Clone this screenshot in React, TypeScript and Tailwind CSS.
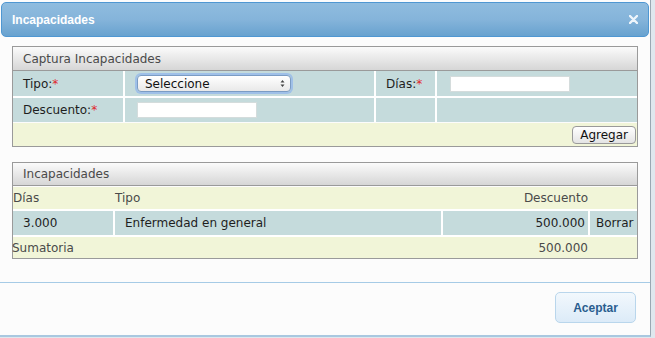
import React from 'react';

const font = { fontFamily: '"DejaVu Sans", "Liberation Sans", sans-serif' };
const boldFont = { fontFamily: '"Liberation Sans", Arial, sans-serif' };

function Req() {
  return <span className="text-[#e0262c]">*</span>;
}

export default function App() {
  return (
    <div className="w-[655px] h-[338px] bg-[#dfe8ee] overflow-hidden" style={font}>
      <div className="w-[651px] h-[337px] bg-[#fcfcfc] border-r border-[#9aa8b2] border-b-2 border-b-[#a9c8e0] flex flex-col">
        {/* TITLE BAR */}
        <div className="mx-[1px] mt-[2px] h-[35px] rounded-[5px] border border-[#4f97d2] bg-gradient-to-b from-[#8fbcdf] via-[#85b4da] to-[#68a2cf] flex items-center justify-between pl-[10px] pr-[10px]">
          <span className="text-white font-bold text-[12px]" style={boldFont}>Incapacidades</span>
          <svg width="9" height="9" viewBox="0 0 9 9">
            <path d="M1 1 L8 8 M8 1 L1 8" stroke="#eef5fb" strokeWidth="2.4" strokeLinecap="round" />
          </svg>
        </div>

        {/* CAPTURA */}
        <div className="mx-[12px] mt-[9px] border border-[#9a9a9a]">
          <div className="h-[24px] border-b border-[#9a9a9a] bg-gradient-to-b from-[#fbfbfb] to-[#d6d6d6] flex items-center pl-[10px] text-[12px] text-[#4a4a4a]">
            Captura Incapacidades
          </div>
          <div className="grid grid-cols-[110px_249px_59px_1fr] grid-rows-[25px_24px] gap-[2px] bg-white text-[12px] text-[#1e1e1e]">
            <div className="bg-[#c5dbdc] flex items-center pl-[10px]">Tipo:<Req /></div>
            <div className="bg-[#c5dbdc] flex items-center pl-[12px]">
              <div className="w-[154px] h-[17px] rounded-[4px] border border-[#7b9cc4] shadow-[0_0_0_2px_#9fc0e8] bg-gradient-to-b from-white to-[#e9e9e9] flex items-center justify-between pl-[7px] pr-[5px]">
                <span className="text-[12px] text-[#111]">Seleccione</span>
                <svg width="5" height="9" viewBox="0 0 5 9">
                  <path d="M0.5 3.5 L2.5 1 L4.5 3.5 Z M0.5 5.5 L2.5 8 L4.5 5.5 Z" fill="#444" />
                </svg>
              </div>
            </div>
            <div className="bg-[#c5dbdc] flex items-center pl-[10px]">Días:<Req /></div>
            <div className="bg-[#c5dbdc] flex items-center pl-[13px]">
              <div className="w-[120px] h-[16px] bg-white border border-[#d4dcdc]" />
            </div>
            <div className="bg-[#c5dbdc] flex items-center pl-[10px]">Descuento:<Req /></div>
            <div className="bg-[#c5dbdc] flex items-center pl-[12px]">
              <div className="w-[120px] h-[16px] bg-white border border-[#d4dcdc]" />
            </div>
            <div className="bg-[#c5dbdc]" />
            <div className="bg-[#c5dbdc]" />
          </div>
          <div className="h-[23px] mt-[1px] bg-[#f1f5d8] flex items-center justify-end pr-[1px]">
            <button className="h-[18px] px-[7px] rounded-[4px] border border-[#9a9a9a] bg-gradient-to-b from-white to-[#e4e4e4] text-[12px] text-[#111] leading-none">
              Agregar
            </button>
          </div>
        </div>

        {/* INCAPACIDADES */}
        <div className="mx-[12px] mt-[15px] border border-[#9a9a9a]">
          <div className="h-[23px] border-b border-[#9a9a9a] bg-gradient-to-b from-[#fbfbfb] to-[#d6d6d6] flex items-center pl-[10px] text-[12px] text-[#4a4a4a]">
            Incapacidades
          </div>
          <div className="bg-white text-[12px]">
            <div className="mt-[1px] h-[22px] bg-[#f1f5d8] grid grid-cols-[100px_326px_145px_1fr] gap-x-[2px] items-center text-[#4a4a4a]">
              <span>Días</span>
              <span>Tipo</span>
              <span className="text-right">Descuento</span>
              <span />
            </div>
            <div className="mt-[2px] h-[24px] grid grid-cols-[100px_326px_145px_1fr] gap-x-[2px] text-[#1e1e1e]">
              <div className="bg-[#c5dbdc] flex items-center pl-[10px]">3.000</div>
              <div className="bg-[#c5dbdc] flex items-center pl-[10px]">Enfermedad en general</div>
              <div className="bg-[#c5dbdc] flex items-center justify-end pr-[3px]">500.000</div>
              <div className="bg-[#c5dbdc] flex items-center pl-[6px] whitespace-nowrap">Borrar</div>
            </div>
            <div className="mt-[2px] h-[21px] bg-[#f1f5d8] grid grid-cols-[100px_326px_145px_1fr] gap-x-[2px] items-center text-[#4a4a4a]">
              <span className="-ml-[1px]">Sumatoria</span>
              <span />
              <span className="text-right">500.000</span>
              <span />
            </div>
          </div>
        </div>

        {/* FOOTER */}
        <div className="mt-[23px] border-t border-[#a6cbe6] flex justify-end pt-[9px] pr-[14px]">
          <button
            className="w-[81px] h-[31px] rounded-[5px] border border-[#b9d6ec] bg-gradient-to-b from-[#f2f8fd] to-[#dcebf8] text-[12px] font-bold text-[#2a5d8f]"
            style={boldFont}
          >
            Aceptar
          </button>
        </div>
      </div>
    </div>
  );
}
